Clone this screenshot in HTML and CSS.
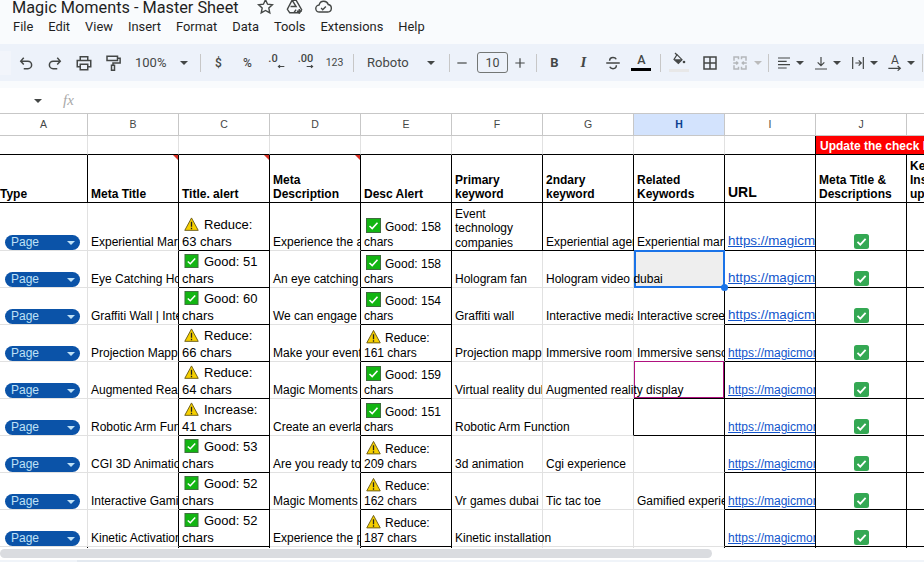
FILE: index.html
```html
<!DOCTYPE html>
<html lang="en">
  <head>
    <meta charset="utf-8" />
    <meta name="viewport" content="width=device-width, initial-scale=1.0" />
    <title>Magic Moments - Master Sheet</title>
    <link rel="stylesheet" href="styles.css">
  </head>

  <body>
    <svg class="defs" width="0" height="0">
      <symbol id="ok" viewBox="0 0 15 15">
        <rect x="0.5" y="0.5" width="14" height="14" fill="#12b512" stroke="#3c6e3c" />
        <path d="M3.5 8 6.2 10.5 11.5 4.8" fill="none" stroke="#fff" stroke-width="1.6" />
      </symbol>
      <symbol id="warn" viewBox="0 0 16 15">
        <path d="M8 1 15.2 14.3H.8z" fill="#f6d000" stroke="#6b5a10" stroke-linejoin="round" />
        <path d="M8 5v5.5M8 11.5v1.6" stroke="#222" stroke-width="1.4" />
      </symbol>
      <symbol id="tick" viewBox="0 0 15 15">
        <rect width="15" height="15" rx="2.5" fill="#34a853" />
        <path d="M3.5 7.8 6.3 10.6 11.6 4.8" fill="none" stroke="#fff" stroke-width="1.8" />
      </symbol>
    </svg>

    <header class="top">
      <div class="titlerow">
        <span class="doc">Magic Moments - Master Sheet</span>
        <svg class="ti" viewBox="0 0 24 24"><path d="M12 3.5l2.6 5.6 6.1.7-4.5 4.2 1.2 6-5.4-3-5.4 3 1.2-6-4.5-4.2 6.1-.7z"/></svg>
        <svg class="ti" viewBox="0 0 24 24"><path d="M9 4h5l7 12-2.5 4H6l-3-4.5zM9 4l5 8H7M11 20l3-4"/><path d="M18 15v6M15 18h6"/></svg>
        <svg class="ti" viewBox="0 0 24 24"><path d="M7 19a4.500 4.500 0 0 1-.5-9A6 6 0 0 1 18 9.500a4.800 4.800 0 0 1-.5 9.500zM9 14l2 2 4-4"/></svg>
      </div>
      <nav class="menu">
        <span>File</span><span>Edit</span><span>View</span><span>Insert</span><span>Format</span><span>Data</span><span>Tools</span><span>Extensions</span><span>Help</span>
      </nav>
    </header>

    <div class="toolbar">
      <div class="stub"></div>
      <div class="tb"><svg viewBox="0 0 24 24"><path d="M9 5 5 9.5l4 4.500M5 9.5h9.500a5 5 0 0 1 0 10H9"/></svg></div>
      <div class="tb"><svg viewBox="0 0 24 24"><path d="M15 5l4 4.500-4 4.500M19 9.5H9.500a5 5 0 0 0 0 10H15"/></svg></div>
      <div class="tb"><svg viewBox="0 0 24 24"><path d="M7 8V3.5h10V8M7 17H3V8.5h18V17h-4M7 13.5h10V21H7z"/></svg></div>
      <div class="tb"><svg viewBox="0 0 24 24"><path d="M4 3h14v5.5H4zM18 5.500h3.500V12H12v3M10 15h4v6.500h-4z"/></svg></div>
      <div class="zoomsel">100%<i class="caret"></i></div>
      <div class="sep"></div>
      <div class="tb txt">$</div>
      <div class="tb txt">%</div>
      <div class="tb dec less"><b>.0</b><svg viewBox="0 0 12 6"><path d="M11 3H2M4.5.8 2 3l2.500 2.200"/></svg></div>
      <div class="tb dec"><b>.00</b><svg viewBox="0 0 12 6"><path d="M1 3h9M7.5.8 10 3 7.500 5.200"/></svg></div>
      <div class="tb num">123</div>
      <div class="sep"></div>
      <div class="fontsel">Roboto<i class="caret"></i></div>
      <div class="sep"></div>
      <div class="tb narrow minus"><svg viewBox="0 0 24 24"><path d="M5 12h14"/></svg></div>
      <div class="sizebox">10</div>
      <div class="tb narrow"><svg viewBox="0 0 24 24"><path d="M5 12h14M12 5v14"/></svg></div>
      <div class="sep"></div>
      <div class="tb bold">B</div>
      <div class="tb ital">I</div>
      <div class="tb"><svg viewBox="0 0 24 24"><path d="M3 12h18M7.5 9c0-3 2-4.500 4.500-4.500 2 0 3.500.8 4.300 2.500M16.500 15c0 3-2 4.500-4.500 4.500-2 0-3.500-.8-4.300-2.500"/></svg></div>
      <div class="tb colora"><span>A</span><i></i></div>
      <div class="sep"></div>
      <div class="tb wide fill"><svg viewBox="0 0 24 24"><path d="M9 4l7.500 7.500-5.500 5.500-6.500-6z"/><path class="solid" d="M4.500 11h12l-5.500 6z"/><path d="M6 1.500l3 3"/><circle class="solid" cx="19.500" cy="15" r="2" /></svg><i></i></div>
      <div class="tb wide"><svg viewBox="0 0 24 24"><path d="M4 4h16v16H4zM12 4v16M4 12h16"/></svg></div>
      <div class="tb merge"><svg viewBox="0 0 24 24"><path d="M4 9V4h6v3M20 9V4h-6v3M4 15v5h6v-3M20 15v5h-6v-3M3 12h6M7 10l2 2-2 2M21 12h-6M17 10l-2 2 2 2"/></svg></div>
      <i class="caret off"></i>
      <div class="sep"></div>
      <div class="tb pair"><svg viewBox="0 0 24 24"><path d="M3 4.5h18M3 9.500h13M3 14.500h18M3 19.500h13"/></svg><i class="caret"></i></div>
      <div class="tb pair"><svg viewBox="0 0 24 24"><path d="M12 3v13M7 11l5 5 5-5M3 21h18"/></svg><i class="caret"></i></div>
      <div class="tb pair"><svg viewBox="0 0 24 24"><path d="M4 3v18M20 3v18M8 12h9M13 8l4 4-4 4"/></svg><i class="caret"></i></div>
      <div class="tb pair rot"><span>A</span><svg viewBox="0 0 24 24"><path d="M2 20h17M16 16.500l4 3.500-4 3.500"/></svg><i class="caret"></i></div>
      <div class="sep last"></div>
    </div>

    <div class="fbar">
      <i class="caret"></i>
      <span class="fx">fx</span>
    </div>

    <div class="sheet">
      <table>
        <colgroup>
          <col class="ca"><col><col><col><col><col><col><col><col><col><col>
        </colgroup>
        <tr class="letters">
          <th>A</th><th>B</th><th>C</th><th>D</th><th>E</th><th>F</th><th>G</th><th class="on">H</th><th>I</th><th>J</th><th>&nbsp;</th>
        </tr>
        <tr class="r1">
          <td></td><td></td><td></td><td></td><td></td><td></td><td></td><td></td><td class="br"></td>
          <td class="flag" colspan="2">Update the check list</td>
        </tr>
        <tr class="heads">
          <td class="bb br">Type</td>
          <td class="bb br note">Meta Title</td>
          <td class="bb br note">Title. alert</td>
          <td class="bb br note">Meta<br>Description</td>
          <td class="bb br">Desc Alert</td>
          <td class="bb br">Primary<br>keyword</td>
          <td class="bb br">2ndary<br>keyword</td>
          <td class="bb br">Related<br>Keywords</td>
          <td class="bb br url">URL</td>
          <td class="bb br">Meta Title &amp;<br>Descriptions</td>
          <td class="bb br">Keyword<br>Insertion<br>updated</td>
        </tr>
        <tr class="tall">
          <td><span class="chip">Page<i></i></span></td>
          <td class="br">Experiential Marketing</td>
          <td class="alert bb br"><svg class="em"><use href="#warn"/></svg>Reduce:<br>63 chars</td>
          <td class="br">Experience the art of</td>
          <td class="alert2 bb br"><svg class="em"><use href="#ok"/></svg>Good: 158<br>chars</td>
          <td class="wrap bb br">Event technology companies</td>
          <td class="bb br">Experiential agency</td>
          <td class="bb br">Experiential marketing</td>
          <td class="link big bb br"><a>https://magicmoments.ae</a></td>
          <td class="mark bb br"><svg class="tk"><use href="#tick"/></svg></td>
          <td class="bb br"></td>
        </tr>
        <tr>
          <td><span class="chip">Page<i></i></span></td>
          <td class="br">Eye Catching Hologram</td>
          <td class="alert bb br"><svg class="em"><use href="#ok"/></svg>Good: 51<br>chars</td>
          <td class="br">An eye catching way</td>
          <td class="alert2 bb br"><svg class="em"><use href="#ok"/></svg>Good: 158<br>chars</td>
          <td>Hologram fan</td>
          <td class="over">Hologram video dubai</td>
          <td class="selected br"><b class="handle"></b></td>
          <td class="link big bb br"><a>https://magicmoments.ae</a></td>
          <td class="mark bb br"><svg class="tk"><use href="#tick"/></svg></td>
          <td class="bb br"></td>
        </tr>
        <tr>
          <td><span class="chip">Page<i></i></span></td>
          <td class="br">Graffiti Wall | Interactive</td>
          <td class="alert bb br"><svg class="em"><use href="#ok"/></svg>Good: 60<br>chars</td>
          <td class="br">We can engage your</td>
          <td class="alert2 bb br"><svg class="em"><use href="#ok"/></svg>Good: 154<br>chars</td>
          <td>Graffiti wall</td>
          <td>Interactive media wall</td>
          <td class="br">Interactive screens</td>
          <td class="link big bb br"><a>https://magicmoments.ae</a></td>
          <td class="mark bb br"><svg class="tk"><use href="#tick"/></svg></td>
          <td class="bb br"></td>
        </tr>
        <tr>
          <td><span class="chip">Page<i></i></span></td>
          <td class="br">Projection Mapping</td>
          <td class="alert bb br"><svg class="em"><use href="#warn"/></svg>Reduce:<br>66 chars</td>
          <td class="br">Make your event more</td>
          <td class="alert2 bb br"><svg class="em"><use href="#warn"/></svg>Reduce:<br>161 chars</td>
          <td>Projection mapping</td>
          <td>Immersive room</td>
          <td class="br">Immersive sensory</td>
          <td class="link bb br"><a>https://magicmoments.ae</a></td>
          <td class="mark bb br"><svg class="tk"><use href="#tick"/></svg></td>
          <td class="bb br"></td>
        </tr>
        <tr>
          <td><span class="chip">Page<i></i></span></td>
          <td class="br">Augmented Reality</td>
          <td class="alert bb br"><svg class="em"><use href="#warn"/></svg>Reduce:<br>64 chars</td>
          <td class="br">Magic Moments is the</td>
          <td class="alert2 bb br"><svg class="em"><use href="#ok"/></svg>Good: 159<br>chars</td>
          <td>Virtual reality dubai</td>
          <td class="over">Augmented reality display</td>
          <td class="collab bb br"></td>
          <td class="link bb br"><a>https://magicmoments.ae</a></td>
          <td class="mark bb br"><svg class="tk"><use href="#tick"/></svg></td>
          <td class="bb br"></td>
        </tr>
        <tr>
          <td><span class="chip">Page<i></i></span></td>
          <td class="br">Robotic Arm Function</td>
          <td class="alert bb br"><svg class="em"><use href="#warn"/></svg>Increase:<br>41 chars</td>
          <td class="br">Create an everlasting</td>
          <td class="alert2 bb br"><svg class="em"><use href="#ok"/></svg>Good: 151<br>chars</td>
          <td class="over">Robotic Arm Function</td>
          <td class="br"></td>
          <td class="bb br"></td>
          <td class="link bb br"><a>https://magicmoments.ae</a></td>
          <td class="mark bb br"><svg class="tk"><use href="#tick"/></svg></td>
          <td class="bb br"></td>
        </tr>
        <tr>
          <td><span class="chip">Page<i></i></span></td>
          <td class="br">CGI 3D Animation</td>
          <td class="alert bb br"><svg class="em"><use href="#ok"/></svg>Good: 53<br>chars</td>
          <td class="br">Are you ready to see</td>
          <td class="alert2 bb br"><svg class="em"><use href="#warn"/></svg>Reduce:<br>209 chars</td>
          <td>3d animation</td>
          <td>Cgi experience</td>
          <td class="br"></td>
          <td class="link bb br"><a>https://magicmoments.ae</a></td>
          <td class="mark bb br"><svg class="tk"><use href="#tick"/></svg></td>
          <td class="bb br"></td>
        </tr>
        <tr>
          <td><span class="chip">Page<i></i></span></td>
          <td class="br">Interactive Gaming</td>
          <td class="alert bb br"><svg class="em"><use href="#ok"/></svg>Good: 52<br>chars</td>
          <td class="br">Magic Moments brings</td>
          <td class="alert2 bb br"><svg class="em"><use href="#warn"/></svg>Reduce:<br>162 chars</td>
          <td>Vr games dubai</td>
          <td>Tic tac toe</td>
          <td class="br">Gamified experience</td>
          <td class="link bb br"><a>https://magicmoments.ae</a></td>
          <td class="mark bb br"><svg class="tk"><use href="#tick"/></svg></td>
          <td class="bb br"></td>
        </tr>
        <tr>
          <td><span class="chip">Page<i></i></span></td>
          <td class="br">Kinetic Activations</td>
          <td class="alert bb br"><svg class="em"><use href="#ok"/></svg>Good: 52<br>chars</td>
          <td class="br">Experience the power</td>
          <td class="alert2 bb br"><svg class="em"><use href="#warn"/></svg>Reduce:<br>187 chars</td>
          <td class="over">Kinetic installation</td>
          <td></td>
          <td class="br"></td>
          <td class="link bb br"><a>https://magicmoments.ae</a></td>
          <td class="mark bb br"><svg class="tk"><use href="#tick"/></svg></td>
          <td class="bb br"></td>
        </tr>
        <tr>
          <td class="br"></td><td class="br"></td><td class="br"></td><td class="br"></td><td class="br"></td><td></td><td></td><td class="br"></td><td class="br"></td><td class="br"></td><td class="br"></td>
        </tr>
      </table>
    </div>

    <div class="hscroll"><div class="thumb"></div></div>
    <div class="tabs"><div class="tab"></div></div>
  </body>
</html>
```

FILE: styles.css
```css
* {
  box-sizing: border-box;
}

html, body {
  height: 100%;
}

body {
  margin: 0;
  overflow: hidden;
  display: flex;
  flex-direction: column;
  background-color: #f9fbfd;
  color: #1f1f1f;
  font-family: "Liberation Sans", Arial, sans-serif;
}

.defs {
  position: absolute;
}

/* top area */
.top {
  height: 44px;
  flex: none;
  padding-left: 12px;
  font-family: Roboto, sans-serif;
}

.titlerow {
  height: 18px;
  display: flex;
  align-items: center;
  overflow: hidden;
}

.doc {
  font-size: 16.3px;
  line-height: 16px;
  margin-top: -3px;
  width: 244px;
  flex: none;
}

.ti {
  width: 19px;
  height: 19px;
  margin-right: 10px;
  margin-top: -5px;
  fill: none;
  stroke: #444746;
  stroke-width: 1.8;
}

.menu {
  display: flex;
  gap: 15px;
  height: 18px;
  padding-left: 1px;
  font-size: 12.9px;
  line-height: 18px;
}

/* toolbar */
.toolbar {
  height: 37px;
  flex: none;
  display: flex;
  align-items: center;
  background-color: #edf2fa;
  color: #444746;
  font-family: Roboto, sans-serif;
  white-space: nowrap;
  overflow: hidden;
}

.stub {
  width: 11px;
  height: 24px;
  flex: none;
  background-color: #f2f5fb;
}

.tb {
  width: 29px;
  height: 24px;
  flex: none;
  display: flex;
  align-items: center;
  justify-content: center;
  position: relative;
}

.tb svg {
  width: 18px;
  height: 18px;
  fill: none;
  stroke: #444746;
  stroke-width: 2;
}

.tb svg .solid {
  fill: #444746;
  stroke: none;
}

.sep {
  width: 1px;
  height: 18px;
  margin: 0 3px 0 4px;
  flex: none;
  background-color: #c7c7c7;
}

.sep.last {
  margin-left: 2px;
}

.caret {
  display: inline-block;
  width: 0;
  height: 0;
  flex: none;
  border-left: 4px solid transparent;
  border-right: 4px solid transparent;
  border-top: 4px solid #444746;
}

.caret.off {
  margin-right: 2px;
  border-top-color: #bbb;
}

.zoomsel {
  width: 64px;
  flex: none;
  margin-right: 5px;
  padding: 0 3px 0 8px;
  display: flex;
  justify-content: space-between;
  align-items: center;
  font-size: 13px;
}

.fontsel {
  width: 86px;
  flex: none;
  margin-right: 2px;
  display: flex;
  justify-content: space-between;
  align-items: center;
  padding: 0 8px 0 10px;
  font-size: 13px;
}

.txt {
  font-size: 12px;
  font-weight: 500;
}

.num {
  font-size: 10.5px;
}

.dec {
  flex-direction: column;
  line-height: 9px;
}

.dec b {
  font-size: 11px;
  font-weight: 500;
  margin-top: -3px;
}

.dec.less b {
  margin-right: 7px;
}

.tb.dec svg {
  width: 8px;
  height: 5px;
  margin: 1px 0 0 8px;
  stroke-width: 1.6;
}

.tb.narrow {
  width: 24px;
}

.tb.minus {
  margin-left: -3px;
}

.tb.narrow svg {
  width: 16px;
  height: 16px;
  stroke-width: 1.8;
}

.sizebox {
  width: 31px;
  height: 21px;
  margin-left: 3px;
  flex: none;
  border: 1px solid #747775;
  border-radius: 3px;
  text-align: center;
  font-size: 12.5px;
  line-height: 19px;
}

.bold {
  font-size: 13px;
  font-weight: 700;
}

.ital {
  font-family: "Liberation Serif", serif;
  font-style: italic;
  font-size: 15px;
  font-weight: 700;
}

.colora {
  font-size: 12.5px;
  font-weight: 500;
}

.colora span {
  margin-top: -6px;
}

.colora i {
  position: absolute;
  left: 4px;
  top: 17px;
  width: 20px;
  height: 3px;
  background-color: #000;
}

.tb.wide {
  width: 31px;
}

.tb.fill {
  margin-left: -1px;
}

.fill i {
  position: absolute;
  left: 6px;
  top: 18px;
  width: 20px;
  height: 3px;
  background-color: #e8e8e8;
}

.tb.fill svg {
  width: 16px;
  height: 16px;
  margin-top: -6px;
  stroke-width: 1.8;
}

.tb.merge svg {
  stroke: #b4b7ba;
}

.tb.pair {
  width: 37px;
  padding-left: 4px;
  justify-content: flex-start;
  gap: 4px;
}

.tb.pair svg {
  width: 16px;
  height: 16px;
  flex: none;
  stroke-width: 1.8;
}

.rot span {
  position: absolute;
  left: 8px;
  top: 2px;
  font-size: 12px;
}

/* formula bar */
.fbar {
  height: 25px;
  margin-top: 7px;
  flex: none;
  display: flex;
  align-items: center;
  padding-left: 34px;
  gap: 21px;
  background-color: #fff;
}

.fx {
  font-family: "Liberation Serif", serif;
  font-style: italic;
  font-size: 15px;
  color: #a8a8a8;
}

/* sheet */
.sheet {
  flex: none;
  height: 435px;
  overflow: hidden;
  background-color: #fff;
}

table {
  width: 998px;
  table-layout: fixed;
  border-collapse: separate;
  border-spacing: 0;
  font-size: 12px;
  color: #000;
}

col {
  width: 91px;
}

col.ca {
  width: 88px;
}

th, td {
  border-right: 1px solid #e1e1e1;
  border-bottom: 1px solid #e1e1e1;
  padding: 0 3px;
  height: 37px;
  white-space: nowrap;
  overflow: hidden;
  vertical-align: bottom;
  line-height: 15px;
  position: relative;
}

td:first-child {
  padding-left: 0;
}

.letters th {
  height: 23px;
  border-top: 1px solid #c7c7c7;
  border-right: 1px solid #c7c7c7;
  border-bottom: 1px solid #c7c7c7;
  padding: 0;
  text-align: center;
  vertical-align: middle;
  font-size: 10.5px;
  font-weight: 400;
  color: #444746;
}

.letters .on {
  background-color: #d3e3fd;
  color: #0b3f8f;
  font-weight: 700;
}

.r1 td {
  height: 19px;
  border-bottom-color: #000;
}

.r1 .flag {
  padding: 2px 4px 0;
  background-color: #f00;
  color: #fff;
  font-weight: 700;
  vertical-align: middle;
}

.heads td {
  height: 48px;
  padding-bottom: 1px;
  font-weight: 700;
  line-height: 14px;
}

.heads .url {
  font-size: 14px;
  padding-bottom: 3px;
}

.tall td {
  height: 48px;
}

.bb {
  border-bottom-color: #000;
}

.br {
  border-right-color: #000;
}

.wrap {
  white-space: normal;
  line-height: 14.5px;
}

.over {
  overflow: visible;
  z-index: 1;
}

.note::after {
  content: "";
  position: absolute;
  top: 0;
  right: 0;
  border-top: 5px solid #d93025;
  border-left: 5px solid transparent;
}

.chip {
  display: flex;
  align-items: center;
  justify-content: space-between;
  width: 75px;
  height: 15px;
  margin-left: 5px;
  padding: 0 5px 0 6px;
  border-radius: 8px;
  background-color: #0b53a8;
  color: #bfe1f6;
  line-height: 15px;
}

.chip i {
  border-left: 4px solid transparent;
  border-right: 4px solid transparent;
  border-top: 4px solid #bfe1f6;
}

.alert {
  font-size: 13px;
  line-height: 17px;
}

.alert2 {
  line-height: 15px;
}

.em {
  width: 15px;
  height: 15px;
  margin: 0 4px 0 2px;
  vertical-align: -2px;
}

.alert .em {
  height: 14px;
  margin-right: 5px;
}

.link a {
  color: #1155cc;
  text-decoration: underline;
}

.link.big {
  padding-bottom: 2px;
  font-size: 13.4px;
}

.mark {
  text-align: center;
  padding: 0 0 1px;
}

.tk {
  width: 15px;
  height: 15px;
  display: inline-block;
  vertical-align: bottom;
}

.selected {
  background-color: #eee;
  overflow: visible;
}

.selected::after {
  content: "";
  position: absolute;
  top: -1px;
  left: 0;
  right: -1px;
  bottom: -1px;
  border: 2px solid #1a73e8;
}

.handle {
  position: absolute;
  right: -4px;
  bottom: -4px;
  width: 7px;
  height: 7px;
  border-radius: 50%;
  background-color: #1a73e8;
  z-index: 1;
}

.collab {
  overflow: visible;
}

.collab::after {
  content: "";
  position: absolute;
  top: -1px;
  left: 0;
  right: 0;
  bottom: 0;
  border: 1px solid #b0127f;
}

/* bottom */
.hscroll {
  height: 12px;
  flex: none;
  padding: 1px 0 2px;
  background-color: #fff;
}

.thumb {
  width: 712px;
  height: 9px;
  border-radius: 5px;
  background-color: #dadce0;
}

.tabs {
  flex: 1;
  padding-left: 77px;
  background-color: #f0f4f9;
}

.tab {
  width: 83px;
  height: 100%;
  background-color: #e3e9f0;
}
```
